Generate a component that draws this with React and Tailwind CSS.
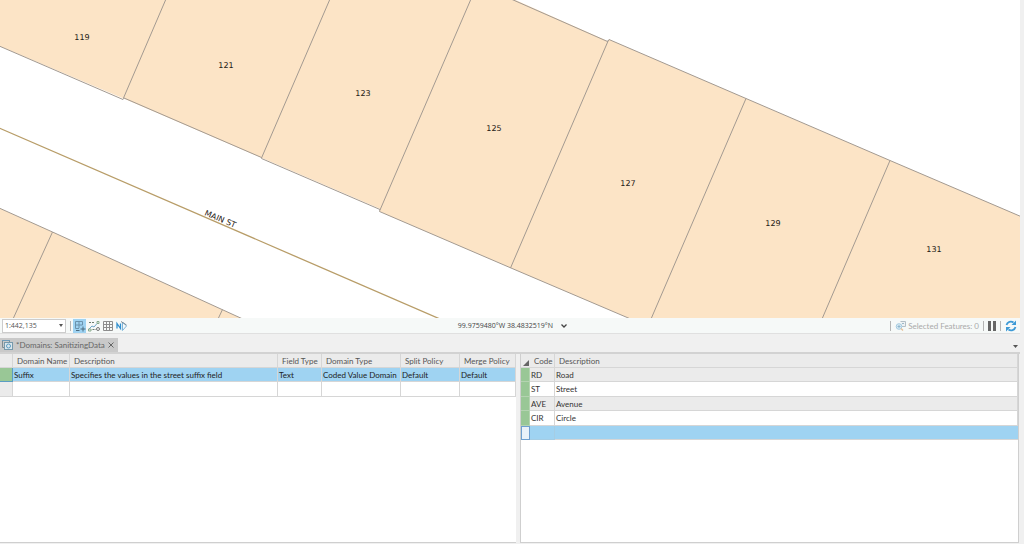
import React, { useState } from "react";

const parcelLabels = [
  { id: "119", x: 82, y: 40 },
  { id: "121", x: 226, y: 68 },
  { id: "123", x: 363, y: 96 },
  { id: "125", x: 494, y: 131 },
  { id: "127", x: 628, y: 186 },
  { id: "129", x: 773, y: 226 },
  { id: "131", x: 934, y: 252 },
];

const domains = [
  {
    name: "Suffix",
    description: "Specifies the values in the street suffix field",
    fieldType: "Text",
    domainType: "Coded Value Domain",
    split: "Default",
    merge: "Default",
  },
];

const codedValues = [
  { code: "RD", description: "Road" },
  { code: "ST", description: "Street" },
  { code: "AVE", description: "Avenue" },
  { code: "CIR", description: "Circle" },
];

const ParcelMap = () => (
  <div className="pr-1">
    <svg viewBox="0 0 1020 318" className="block w-full bg-white">
      <g fill="#fce4c6" stroke="#a39a91" strokeWidth="1">
        <path d="M-2 -2H511L607.500 41L609 39.500L746 98.500L890 160.500L1022 217V320H633L511 268L379.500 211.500L380.500 209L262 158L123.500 98.500L-2 45.500Z" stroke="none" />
        <path d="M-2 207.500L52.500 232L222 309.500L245 320H-2Z" />
        <path
          d="M-2 45.500L123 99.500L124 98L261.500 157.500V158.500L380 209.500L379.500 211.500L511 268L633 320M511 -1L607.500 41.500L609 39.500L746 98.500L890 160.500L1022 217"
          fill="none"
        />
        <path
          d="M166 -1L123.500 98M330 -1L261.500 158M471 -1L380 210M608.500 40L510.500 268M746 98.500L651 319M890 160.500L822 319M52.500 232L13 319M222.500 309.500L218 319"
          fill="none"
        />
      </g>
      <path d="M-2 127.500L440 319" fill="none" stroke="#b89d68" strokeWidth="1.300" />
      <g
        className="font-['DejaVu_Sans',sans-serif] text-[8px] [text-rendering:geometricPrecision]"
        fill="#1f1b16"
      >
        {parcelLabels.map((label) => (
          <text key={label.id} x={label.x} y={label.y} textAnchor="middle">
            {label.id}
          </text>
        ))}
        <text x="204" y="215" transform="rotate(23 204 215)">
          MAIN ST
        </text>
      </g>
    </svg>
  </div>
);

const Divider = () => <span className="h-[10px] w-px bg-[#b5b5b5]" />;

const SnappingIcon = () => (
  <svg viewBox="0 0 12 12" className="size-3 shrink-0" fill="none" stroke="#6a93ad">
    <path d="M1.500 1.500H8.500V5M1.500 1.500V8.500H5M5 1.500V8M1.500 5H8.500" />
    <path d="M2 10.500H5.500M9 6.500V11.500M6.500 9H11.500" stroke="#4b6c80" />
  </svg>
);

const ConstraintsIcon = () => (
  <svg viewBox="0 0 12 12" className="size-3" fill="none">
    <path d="M1 2.500H7M4.500 9.500H8" stroke="#6b7b6d" strokeDasharray="2 1" />
    <path d="M1 9L4 6L6 7L9 3.500" stroke="#6da5c7" />
    <path d="M9 1.500H11V3.500H9ZM0.500 9H3V11H0.500Z" stroke="#86a98a" />
    <circle cx="10" cy="9" r="1.500" stroke="#777" />
  </svg>
);

const GridIcon = () => (
  <svg viewBox="0 0 12 12" className="size-3" fill="none" stroke="#8d8d8d">
    <path d="M1.500 1.500H10.500V10.500H1.500ZM4.500 1.500V10.500M7.500 1.500V10.500M1.500 4.500H10.500M1.500 7.500H10.500" />
  </svg>
);

const NorthIcon = () => (
  <svg viewBox="0 0 12 12" className="size-3" fill="none">
    <path d="M1 8.500V3.500L4.500 8.500V3.500" stroke="#2f8fce" strokeWidth="1.300" />
    <path d="M6.500 2V10.500L10.500 6Z" stroke="#7db5da" />
    <path d="M5 1.500L10.500 5" stroke="#7d8b94" />
  </svg>
);

const SelectedIcon = () => (
  <svg viewBox="0 0 12 12" className="size-3" fill="none">
    <path d="M5.500 1.500H10.500V6.500H7" stroke="#b4bfc6" fill="#eef1f3" />
    <path d="M7 3.500H9M1.500 5.500H5" stroke="#9db9c8" />
    <circle cx="4" cy="6.500" r="2.800" stroke="#a5cbe0" fill="#dcecf5" />
    <path d="M2.500 6.500H5.500M4 5V8" stroke="#8db7ce" />
    <path d="M6 8.500L8 10.500" stroke="#e6bd93" strokeWidth="1.300" />
  </svg>
);

const RefreshIcon = () => (
  <svg viewBox="0 0 12 12" className="size-3">
    <path d="M1.500 5A4.500 4.500 0 0 1 8.500 2.500" fill="none" stroke="#3d9ad6" strokeWidth="1.800" />
    <path d="M10.500 7A4.500 4.500 0 0 1 3.500 9.500" fill="none" stroke="#3d9ad6" strokeWidth="1.800" />
    <path d="M11 0.500V5H6.500ZM1 11.500V7H5.500Z" fill="#3d9ad6" />
  </svg>
);

const DomainsIcon = () => (
  <svg viewBox="0 0 12 12" className="size-3 shrink-0" fill="none">
    <path d="M8.500 3V1.500H1.500V8.500H3" stroke="#7f8c93" />
    <path d="M1 1.500H9" stroke="#6f9cba" />
    <rect x="3.500" y="3.500" width="8" height="7" fill="#dce7ed" stroke="#7799ab" />
    <circle cx="7.500" cy="7" r="2" stroke="#5b9dc3" />
  </svg>
);

const MapToolbar = () => {
  const [snapping, setSnapping] = useState(true);

  return (
    <div className="mr-1 flex h-4 items-center border-b border-[#e0e0e0] bg-[#f6f9f8] text-[#555]">
      <div className="flex flex-1 items-center">
        <div className="relative ml-[2px] flex h-[14px] w-16 items-center border border-[#ccc] bg-white">
          <select
            aria-label="Map scale"
            className="h-full w-full appearance-none bg-transparent pl-[2px] font-['Open_Sans',sans-serif] text-[7px] leading-3"
          >
            <option>1:442,135</option>
          </select>
          <svg viewBox="0 0 4 3" className="pointer-events-none absolute right-[2px] h-[3px] w-1" fill="#555">
            <path d="M0 0H4L2 3Z" />
          </svg>
        </div>
        <div className="ml-1 flex items-center gap-[2px]">
          <Divider />
          <button
            type="button"
            aria-label="Snapping"
            onClick={() => setSnapping(!snapping)}
            className={`flex h-[14px] w-[13px] items-center justify-center ${
              snapping ? "bg-[#9fd3f2]" : ""
            }`}
          >
            <SnappingIcon />
          </button>
          <button type="button" aria-label="Constraints">
            <ConstraintsIcon />
          </button>
          <button type="button" aria-label="Grid">
            <GridIcon />
          </button>
          <button type="button" aria-label="North orientation">
            <NorthIcon />
          </button>
        </div>
        <div className="ml-[5px]">
          <Divider />
        </div>
      </div>

      <button
        type="button"
        className="flex items-center gap-2 pl-2 font-['Open_Sans',sans-serif] text-[7px] text-[#444]"
      >
        <span>99.9759480°W 38.4832519°N</span>
        <svg viewBox="0 0 6 4" className="h-1 w-[6px]" fill="none" stroke="#444" strokeWidth="1.300">
          <path d="M0.500 0.500L3 3L5.500 0.500" />
        </svg>
      </button>

      <div className="flex flex-1 items-center justify-end gap-1 pr-[3px]">
        <Divider />
        <div className="flex items-center gap-px">
          <SelectedIcon />
          <span className="text-[#aaa]">Selected Features: 0</span>
        </div>
        <Divider />
        <button type="button" aria-label="Pause drawing" className="flex gap-[2px]">
          <span className="h-[10px] w-[3px] bg-[#666]" />
          <span className="h-[10px] w-[3px] bg-[#666]" />
        </button>
        <Divider />
        <button type="button" aria-label="Refresh">
          <RefreshIcon />
        </button>
      </div>
    </div>
  );
};

const TabStrip = () => (
  <div className="mr-1 flex h-[20px] items-end justify-between border-b-2 border-[#d2d2d2]">
    <div className="flex h-[14px] w-[118px] items-center bg-[#c9c9c9] pl-px text-[#666]">
      <DomainsIcon />
      <span className="flex-1 pl-[3px] whitespace-nowrap">*Domains: SanitizingData</span>
      <button type="button" aria-label="Close tab" className="pr-1">
        <svg viewBox="0 0 6 6" className="size-[6px]" fill="none" stroke="#666">
          <path d="M0.500 0.500L5.500 5.500M5.500 0.500L0.500 5.500" />
        </svg>
      </button>
    </div>
    <button type="button" aria-label="Tab list" className="mb-1 mr-[2px]">
      <svg viewBox="0 0 5 3" className="h-[3px] w-[5px]" fill="#555">
        <path d="M0 0H5L2.500 3Z" />
      </svg>
    </button>
  </div>
);

const headCell = "border-r border-b border-[#d6d6d6] pl-1 text-left font-normal whitespace-nowrap text-[#555]";
const bodyCell = "border-r border-b border-[#d6d6d6] pl-px whitespace-nowrap";

const DomainTable = () => (
  <div className="border-b border-[#cfcfcf] bg-white">
    <table className="w-full table-fixed border-separate border-spacing-0">
      <colgroup>
        <col className="w-[13px]" />
        <col className="w-[57px]" />
        <col />
        <col className="w-11" />
        <col className="w-[79px]" />
        <col className="w-[59px]" />
        <col className="w-14" />
      </colgroup>
      <thead>
        <tr className="h-[14px] bg-[#ebebeb]">
          <th className={headCell} />
          <th className={headCell}>Domain Name</th>
          <th className={headCell}>Description</th>
          <th className={headCell}>Field Type</th>
          <th className={headCell}>Domain Type</th>
          <th className={headCell}>Split Policy</th>
          <th className={headCell}>Merge Policy</th>
        </tr>
      </thead>
      <tbody>
        {domains.map((domain) => (
          <tr key={domain.name} className="h-[14px] bg-[#9fd3f2] text-[#222]">
            <td className="border-r border-b border-[#5b9dc3] bg-[#99c796]" />
            <td className={bodyCell}>{domain.name}</td>
            <td className={bodyCell}>{domain.description}</td>
            <td className={bodyCell}>{domain.fieldType}</td>
            <td className={bodyCell}>{domain.domainType}</td>
            <td className={bodyCell}>{domain.split}</td>
            <td className={bodyCell}>{domain.merge}</td>
          </tr>
        ))}
        <tr className="h-[15px]">
          <td className={`${bodyCell} bg-[#ebebeb]`} />
          <td className={bodyCell} />
          <td className={bodyCell} />
          <td className={bodyCell} />
          <td className={bodyCell} />
          <td className={bodyCell} />
          <td className={bodyCell} />
        </tr>
      </tbody>
    </table>
  </div>
);

const CodedValueTable = () => (
  <div className="border-r border-b border-l border-[#cfcfcf] bg-white">
    <table className="w-full table-fixed border-separate border-spacing-0">
      <colgroup>
        <col className="w-[9px]" />
        <col className="w-[25px]" />
        <col />
      </colgroup>
      <thead>
        <tr className="h-[14px] bg-[#ebebeb]">
          <th className="border-b border-[#d6d6d6] align-bottom">
            <svg viewBox="0 0 6 6" className="mb-px ml-[2px] size-[6px]" fill="#666">
              <path d="M6 0V6H0Z" />
            </svg>
          </th>
          <th className={headCell}>Code</th>
          <th className={headCell}>Description</th>
        </tr>
      </thead>
      <tbody>
        {codedValues.map((value) => (
          <tr key={value.code} className="odd:h-[14px] odd:bg-[#ebebeb] even:h-[15px] text-[#333]">
            <td className="border-r border-b border-[#b4d3b1] bg-[#99c796]" />
            <td className={bodyCell}>{value.code}</td>
            <td className={bodyCell}>{value.description}</td>
          </tr>
        ))}
        <tr className="h-[14px] bg-[#9fd3f2]">
          <td className="border border-[#6f9fd0] bg-[#eaf1f9]" />
          <td className="border-r border-b border-[#a5cde4]" />
          <td className="border-b border-[#d6d6d6]" />
        </tr>
      </tbody>
    </table>
  </div>
);

const App = () => {
  return (
    <div className="flex min-h-screen flex-col bg-[#f0f0f0] font-['Lato','Open_Sans',sans-serif] text-[8px] leading-3">
      <ParcelMap />
      <MapToolbar />
      <TabStrip />
      <div className="mr-[5px] mb-px grid flex-1 grid-cols-[516fr_499fr] gap-1">
        <DomainTable />
        <CodedValueTable />
      </div>
    </div>
  );
};

export default App;
